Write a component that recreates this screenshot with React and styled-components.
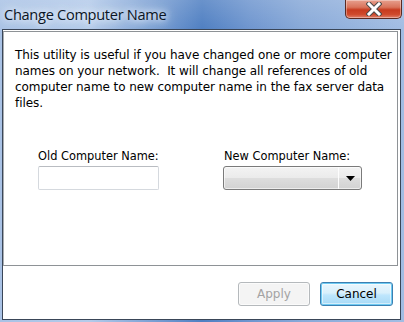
import React from "react";
import styled, { createGlobalStyle } from "styled-components";

const Global = createGlobalStyle`
  html, body { margin: 0; padding: 0; }
  body { width: 404px; height: 322px; overflow: hidden; }
`;

const Frame = styled.div`
  width: 404px;
  height: 322px;
  box-sizing: border-box;
  display: flex;
  flex-direction: column;
  background:
    linear-gradient(to bottom, rgba(255,255,255,0.15), rgba(255,255,255,0) 30px),
    linear-gradient(to right, #a9c2e5 0%, #b4cbea 22%, #7a9fd3 38%, #4f7fc2 50%, #6f96cf 62%, #88a9d8 75%, #a2bde3 100%);
  padding: 0 3px 2px 2px;
`;

const TitleBar = styled.div`
  height: 29px;
  display: flex;
  align-items: flex-start;
  justify-content: space-between;
`;

const Caption = styled.div`
  font-family: "Open Sans", "Noto Sans", sans-serif;
  font-size: 14.6px;
  line-height: 20px;
  color: #0b1524;
  padding: 4px 0 0 2px;
  text-shadow: 0 0 6px #e6eef9, 0 0 10px #e6eef9, 0 0 14px #dbe6f6;
  letter-spacing: -0.3px;
`;

const CloseButton = styled.div`
  width: 57px;
  height: 19px;
  margin-right: -1px;
  box-sizing: border-box;
  border: 1px solid #5a2a22;
  border-top: none;
  border-radius: 0 0 5px 5px;
  background: linear-gradient(to bottom, #e7a08e 0%, #d9745c 40%, #c73b1f 55%, #cf4a2c 80%, #e0806a 100%);
  box-shadow: inset 0 0 0 1px rgba(255,255,255,0.35);
  display: flex;
  align-items: center;
  justify-content: center;
`;

const Client = styled.div`
  flex: 1;
  box-sizing: border-box;
  border: 1px solid #3a4658;
  background: #ffffff;
  display: flex;
  flex-direction: column;
`;

const Panel = styled.div`
  margin: 1px 2px 0 0;
  height: 235px;
  box-sizing: border-box;
  border: 1px solid #8e9296;
  border-left-color: #a9adb1;
  padding: 15px 0 0 11px;
  display: flex;
  flex-direction: column;
`;

const Description = styled.p`
  margin: 0;
  font-family: "DejaVu Sans", Verdana, sans-serif;
  font-size: 12px;
  line-height: 16px;
  color: #000;
  white-space: pre;
  letter-spacing: -0.07px;
`;

const Fields = styled.div`
  display: flex;
  gap: 64px;
  margin: 38px 0 0 23px;
`;

const Field = styled.div`
  display: flex;
  flex-direction: column;
  gap: 3px;
`;

const Label = styled.label`
  font-family: "DejaVu Sans", Verdana, sans-serif;
  font-size: 11.4px;
  line-height: 14px;
  color: #000;
  padding-left: ${(p) => p.$indent || 0}px;
`;

const TextBox = styled.div`
  width: 121px;
  height: 24px;
  box-sizing: border-box;
  border: 1px solid #d5d9de;
  border-top-color: #b9bcc1;
  border-radius: 2px;
  background: #fff;
`;

const Combo = styled.div`
  width: 139px;
  height: 24px;
  box-sizing: border-box;
  border: 1px solid #7a7a7a;
  border-radius: 3px;
  background: linear-gradient(to bottom, #f3f3f3 0%, #ebebeb 48%, #dddddd 52%, #d2d2d2 100%);
  box-shadow: inset 0 0 0 1px rgba(255,255,255,0.6);
  display: flex;
`;

const ComboValue = styled.div`
  flex: 1;
`;

const ComboArrow = styled.div`
  width: 22px;
  border-left: 1px solid #fdfdfd;
  display: flex;
  align-items: center;
  justify-content: center;
`;

const Footer = styled.div`
  flex: 1;
  display: flex;
  justify-content: flex-end;
  align-items: flex-start;
  gap: 10px;
  padding: 16px 7px 0 0;
`;

const Button = styled.div`
  width: ${(p) => p.$w}px;
  height: 24px;
  box-sizing: border-box;
  border-radius: 3px;
  display: flex;
  align-items: center;
  justify-content: center;
  font-family: "DejaVu Sans", Verdana, sans-serif;
  font-size: 12px;
  border: 1px solid ${(p) => (p.$disabled ? "#b5b9bc" : "#3c7fb1")};
  color: ${(p) => (p.$disabled ? "#a3a3a3" : "#000")};
  background: ${(p) =>
    p.$disabled
      ? "#f4f4f4"
      : "linear-gradient(to bottom, #eaf6fd 0%, #d9f0fc 45%, #bee6fd 55%, #a7d9f5 100%)"};
  box-shadow: ${(p) =>
    p.$disabled ? "inset 0 0 0 1px #fbfbfb" : "inset 0 0 0 1px #6ecbf3, inset 0 0 0 2px rgba(255,255,255,0.5)"};
`;

export default function App() {
  return (
    <>
      <Global />
      <Frame>
        <TitleBar>
          <Caption>Change Computer Name</Caption>
          <CloseButton>
            <svg width="16" height="14" viewBox="0 0 16 14">
              <path d="M3 2 L13 12 M13 2 L3 12" stroke="#4a4a4a" strokeWidth="5" strokeLinecap="square" />
              <path d="M3 2 L13 12 M13 2 L3 12" stroke="#ffffff" strokeWidth="3" strokeLinecap="square" />
            </svg>
          </CloseButton>
        </TitleBar>
        <Client>
          <Panel>
            <Description>
              {"This utility is useful if you have changed one or more computer\nnames on your network.  It will change all references of old\ncomputer name to new computer name in the fax server data\nfiles."}
            </Description>
            <Fields>
              <Field>
                <Label>Old Computer Name:</Label>
                <TextBox />
              </Field>
              <Field>
                <Label $indent={1}>New Computer Name:</Label>
                <Combo>
                  <ComboValue />
                  <ComboArrow>
                    <svg width="9" height="5" viewBox="0 0 9 5">
                      <path d="M0 0 H9 L4.5 5 Z" fill="#000" />
                    </svg>
                  </ComboArrow>
                </Combo>
              </Field>
            </Fields>
          </Panel>
          <Footer>
            <Button $w={72} $disabled>Apply</Button>
            <Button $w={73}>Cancel</Button>
          </Footer>
        </Client>
      </Frame>
    </>
  );
}
